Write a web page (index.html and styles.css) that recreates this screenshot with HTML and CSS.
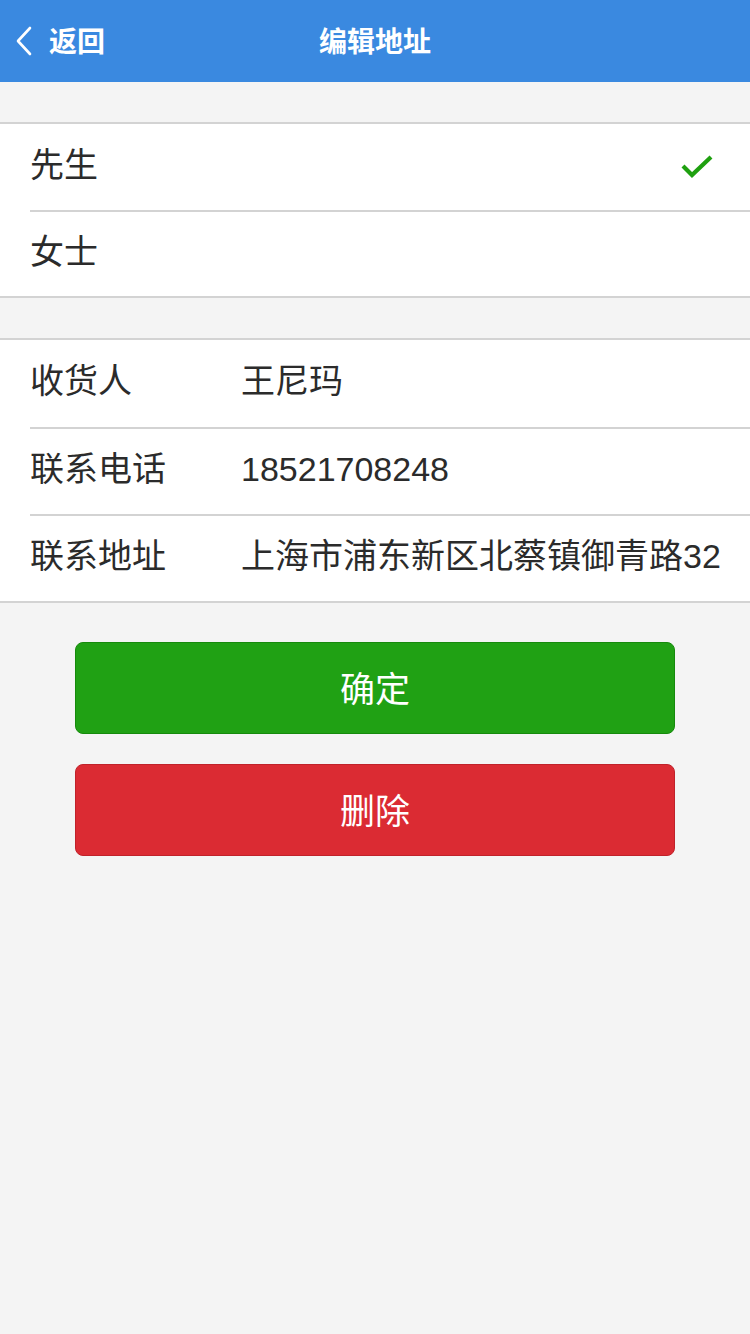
FILE: index.html
```html
<!DOCTYPE html>
<html lang="zh-CN">
<head>
<meta charset="utf-8">
<title>编辑地址</title>
<link rel="stylesheet" href="styles.css">
</head>
<body>
<header class="topbar">
  <div class="back">
    <svg class="chev" width="20" height="32" viewBox="0 0 20 32"><path d="M16 3 L4 16 L16 29" fill="none" stroke="#fff" stroke-width="2.6" stroke-linecap="round" stroke-linejoin="round"/></svg>
    <span class="back-text">返回</span>
  </div>
  <h1 class="title">编辑地址</h1>
</header>

<section class="group first">
  <div class="row">
    <span class="label">先生</span>
    <svg class="check" width="34" height="26" viewBox="0 0 34 26"><path d="M3 13 L12 22 L31 4" fill="none" stroke="#1fa010" stroke-width="4.2" stroke-linejoin="miter"/></svg>
  </div>
  <div class="row">
    <span class="label">女士</span>
  </div>
</section>

<section class="group info">
  <div class="row">
    <span class="label key">收货人</span>
    <span class="value">王尼玛</span>
  </div>
  <div class="row">
    <span class="label key">联系电话</span>
    <span class="value">18521708248</span>
  </div>
  <div class="row">
    <span class="label key">联系地址</span>
    <span class="value">上海市浦东新区北蔡镇御青路32</span>
  </div>
</section>

<div class="actions">
  <button class="btn ok">确定</button>
  <button class="btn del">删除</button>
</div>
</body>
</html>
```

FILE: styles.css
```css
* { box-sizing: border-box; }
html, body { margin: 0; padding: 0; }
body {
  background: #f4f4f4;
  font-family: "Liberation Sans", "Noto Sans CJK SC", sans-serif;
  color: #2b2b2b;
  width: 750px;
  min-height: 1334px;
}
.topbar {
  height: 82px;
  background: #3a89e0;
  display: flex;
  align-items: center;
  position: relative;
  color: #fff;
}
.back {
  display: flex;
  align-items: center;
  padding-left: 14px;
}
.chev { display: block; }
.back-text {
  font-family: "Noto Sans CJK SC", sans-serif;
  font-size: 28px;
  font-weight: 700;
  margin-left: 15px;
  line-height: 1;
  padding-bottom: 2px;
}
.title {
  position: absolute;
  left: 0;
  right: 0;
  top: 0;
  margin: 0;
  height: 82px;
  line-height: 80px;
  text-align: center;
  font-family: "Noto Sans CJK SC", sans-serif;
  font-size: 28px;
  font-weight: 700;
  pointer-events: none;
}
.group {
  background: #fff;
  border-top: 2px solid #d3d3d3;
  border-bottom: 2px solid #d3d3d3;
  margin-top: 40px;
}
.row {
  margin-left: 30px;
  height: 86px;
  display: flex;
  align-items: center;
  padding-right: 36px;
  padding-bottom: 5px;
}
.info .row {
  height: 87px;
}
.row + .row {
  border-top: 2px solid #d3d3d3;
}
.label {
  font-size: 34px;
  line-height: 1;
  flex: 1;
}
.label.key {
  flex: 0 0 211px;
}
.value {
  font-size: 34px;
  line-height: 1;
  white-space: nowrap;
}
.check { display: block; margin-top: 2px; }
.actions {
  display: flex;
  flex-direction: column;
  align-items: center;
  gap: 30px;
  margin-top: 39px;
}
.btn {
  width: 600px;
  height: 92px;
  border-radius: 8px;
  font-family: "Noto Sans CJK SC", sans-serif;
  font-size: 35px;
  color: #fff;
  padding: 0 0 4px 0;
  cursor: pointer;
}
.ok {
  background: #20a114;
  border: 1px solid #168a0c;
}
.del {
  background: #db2b33;
  border: 1px solid #c0222a;
}
```
